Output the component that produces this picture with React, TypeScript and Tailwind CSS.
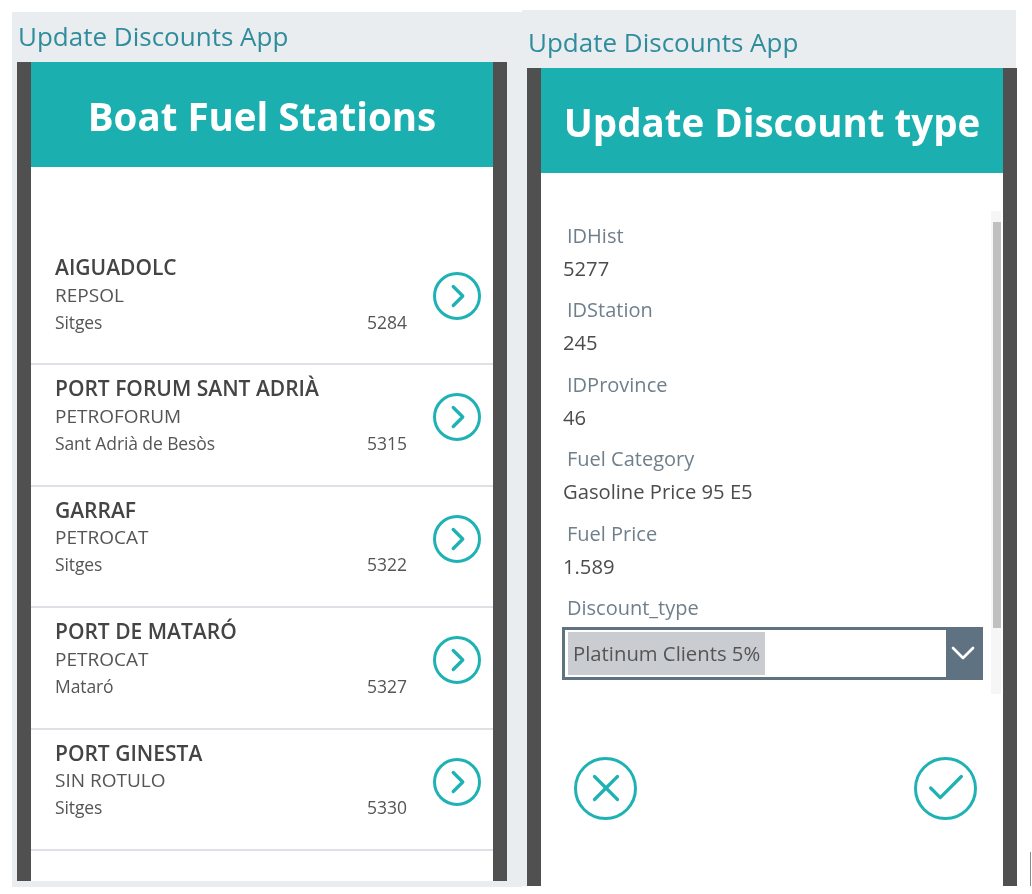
import { Check, ChevronDown, ChevronRight, X } from 'lucide-react'

const stations = [
  { name: 'AIGUADOLC', company: 'REPSOL', city: 'Sitges', id: '5284' },
  { name: 'PORT FORUM SANT ADRIÀ', company: 'PETROFORUM', city: 'Sant Adrià de Besòs', id: '5315' },
  { name: 'GARRAF', company: 'PETROCAT', city: 'Sitges', id: '5322' },
  { name: 'PORT DE MATARÓ', company: 'PETROCAT', city: 'Mataró', id: '5327' },
  { name: 'PORT GINESTA', company: 'SIN ROTULO', city: 'Sitges', id: '5330' },
]

const fields = [
  { label: 'IDHist', value: '5277' },
  { label: 'IDStation', value: '245' },
  { label: 'IDProvince', value: '46' },
  { label: 'Fuel Category', value: 'Gasoline Price 95 E5' },
  { label: 'Fuel Price', value: '1.589' },
]

function Header({ title }: { title: string }) {
  return (
    <div className="h-[105px] shrink-0 bg-[#1cafaf] flex items-center justify-center pt-[3px]">
      <h1 className="text-[38.5px] leading-none font-bold text-white whitespace-nowrap">{title}</h1>
    </div>
  )
}

function AppTitle() {
  return <p className="text-[26px] leading-[32px] text-[#2f8c9c] whitespace-nowrap">Update Discounts App</p>
}

function StationRow({ name, company, city, id }: { name: string; company: string; city: string; id: string }) {
  return (
    <div className="h-[121.4px] shrink-0 border-b-2 border-[#dde1e5] flex pl-6 pr-3">
      <div className="flex-1 pt-[9px]">
        <p className="text-[21px] leading-[28.5px] font-semibold text-[#444444] whitespace-nowrap">{name}</p>
        <p className="text-[19px] leading-[27px] text-[#555555]">{company}</p>
        <div className="flex justify-between text-[17.5px] leading-[27px] text-[#555555] pr-[26px]">
          <span className="tracking-[-0.1px]">{city}</span>
          <span>{id}</span>
        </div>
      </div>
      <div className="mt-[28px] w-[48px] h-[48px] rounded-full border-[3px] border-[#1fb2b4] flex items-center justify-center">
        <ChevronRight className="w-[38px] h-[38px] shrink-0 text-[#1fb2b4] translate-x-[1px]" strokeWidth={2.1} />
      </div>
    </div>
  )
}

function Field({ label, value }: { label: string; value: string }) {
  return (
    <div className="h-[74.4px]">
      <p className="pl-[4px] text-[20px] leading-[32px] text-[#6f7f8c]">{label}</p>
      <p className="text-[20.2px] leading-[33px] text-[#4c4c4c]">{value}</p>
    </div>
  )
}

function RoundIcon({ children }: { children: React.ReactNode }) {
  return (
    <div className="w-[63px] h-[63px] rounded-full border-[3px] border-[#1fb2b4] flex items-center justify-center text-[#1fb2b4]">
      {children}
    </div>
  )
}

export default function App() {
  return (
    <div className="w-[1032px] h-[894px] bg-white overflow-hidden relative flex items-start pl-3 pt-[10px] blur-[0.7px] font-['Open_Sans',sans-serif]">
      {/* left screen */}
      <div className="mt-[2px] w-[510px] h-[875px] bg-[#e9edf0] pl-[5px]">
        <div className="h-[50px] pl-[1px] pt-[8px]">
          <AppTitle />
        </div>
        <div className="w-[490px] h-[819px] bg-white border-x-[14px] border-[#505050] flex flex-col">
          <Header title="Boat Fuel Stations" />
          <div className="h-[77px] shrink-0" />
          {stations.map((s) => (
            <StationRow key={s.id} {...s} />
          ))}
        </div>
      </div>

      {/* right screen */}
      <div className="w-[494px] h-[876px] pl-[5px] bg-[#e9edf0]">
        <div className="h-[58px] pl-[1px] pt-[16px]">
          <AppTitle />
        </div>
        <div className="w-[490px] h-[818px] bg-white border-x-[14px] border-[#505050] flex flex-col">
          <Header title="Update Discount type" />
          <div className="relative pt-[47px] pl-[22px] pr-[19px]">
            <div className="absolute right-[2px] top-[38px] w-[10px] h-[483px] bg-[#f6f6f6]">
              <div className="ml-[2px] mt-[11px] w-[8px] h-[406px] bg-[#c0c0c0]" />
            </div>
            {fields.map((f) => (
              <Field key={f.label} {...f} />
            ))}
            <p className="pl-[4px] text-[20px] leading-[32px] text-[#6f7f8c]">Discount_type</p>
            <div className="mt-[3px] -ml-[1px] h-[53px] w-[421px] border-[3px] border-[#5f7282] flex items-stretch">
              <div className="my-[2px] ml-[3px] w-[197px] bg-[#c9cdd1] pl-[5px] text-[20.3px] leading-[43px] text-[#555555] whitespace-nowrap">
                Platinum Clients 5%
              </div>
              <div className="ml-auto w-[34px] bg-[#5f7282] flex items-center justify-center">
                <ChevronDown className="w-[40px] h-[40px] shrink-0 text-white" strokeWidth={1.6} />
              </div>
            </div>
            <div className="mt-[77px] pl-[11px] pr-[7px] flex justify-between">
              <RoundIcon>
                <X className="w-[46px] h-[46px] shrink-0" strokeWidth={1.7} />
              </RoundIcon>
              <RoundIcon>
                <Check className="w-[46px] h-[46px] shrink-0" strokeWidth={1.7} />
              </RoundIcon>
            </div>
          </div>
        </div>
      </div>

      <div className="absolute left-[1030px] top-[852px] w-[1px] h-[34px] bg-[#8a8a8a]" />
    </div>
  )
}
